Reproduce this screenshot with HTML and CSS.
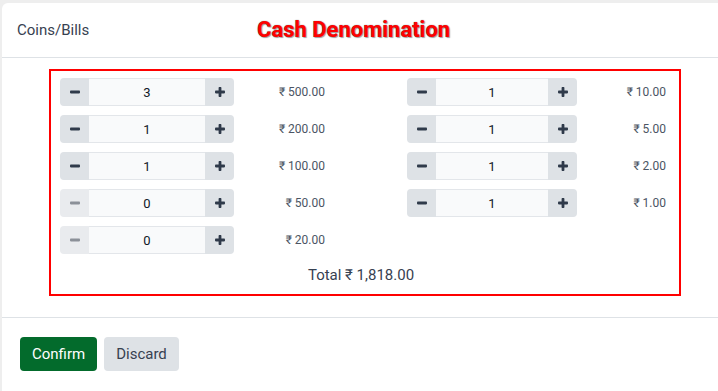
FILE: index.html
```html
<!DOCTYPE html>
<html>
<head>
<meta charset="utf-8">
<link rel="stylesheet" href="styles.css">
</head>
<body>
<div class="modal">
  <div class="header">
    <div class="header-label">Coins/Bills</div>
    <div class="header-title">Cash Denomination</div>
  </div>
  <div class="body">
    <div class="box">
      <div class="grid">
        <div class="item left">
          <div class="group">
            <button class="btn-step"><svg width="10" height="10" viewBox="0 0 10 10"><rect x="0" y="3.6" width="10" height="2.8" rx="0.8" fill="#2f3a4a"/></svg></button>
            <div class="qty">3</div>
            <button class="btn-step"><svg width="10" height="10" viewBox="0 0 10 10"><rect x="0" y="3.6" width="10" height="2.8" rx="0.8" fill="#2f3a4a"/><rect x="3.6" y="0" width="2.8" height="10" rx="0.8" fill="#2f3a4a"/></svg></button>
          </div>
          <div class="value">₹ 500.00</div>
        </div>
        <div class="item left">
          <div class="group">
            <button class="btn-step"><svg width="10" height="10" viewBox="0 0 10 10"><rect x="0" y="3.6" width="10" height="2.8" rx="0.8" fill="#2f3a4a"/></svg></button>
            <div class="qty">1</div>
            <button class="btn-step"><svg width="10" height="10" viewBox="0 0 10 10"><rect x="0" y="3.6" width="10" height="2.8" rx="0.8" fill="#2f3a4a"/><rect x="3.6" y="0" width="2.8" height="10" rx="0.8" fill="#2f3a4a"/></svg></button>
          </div>
          <div class="value">₹ 200.00</div>
        </div>
        <div class="item left">
          <div class="group">
            <button class="btn-step"><svg width="10" height="10" viewBox="0 0 10 10"><rect x="0" y="3.6" width="10" height="2.8" rx="0.8" fill="#2f3a4a"/></svg></button>
            <div class="qty">1</div>
            <button class="btn-step"><svg width="10" height="10" viewBox="0 0 10 10"><rect x="0" y="3.6" width="10" height="2.8" rx="0.8" fill="#2f3a4a"/><rect x="3.6" y="0" width="2.8" height="10" rx="0.8" fill="#2f3a4a"/></svg></button>
          </div>
          <div class="value">₹ 100.00</div>
        </div>
        <div class="item left">
          <div class="group">
            <button class="btn-step disabled"><svg width="10" height="10" viewBox="0 0 10 10"><rect x="0" y="3.6" width="10" height="2.8" rx="0.8" fill="#8b9098"/></svg></button>
            <div class="qty">0</div>
            <button class="btn-step"><svg width="10" height="10" viewBox="0 0 10 10"><rect x="0" y="3.6" width="10" height="2.8" rx="0.8" fill="#2f3a4a"/><rect x="3.6" y="0" width="2.8" height="10" rx="0.8" fill="#2f3a4a"/></svg></button>
          </div>
          <div class="value">₹ 50.00</div>
        </div>
        <div class="item left">
          <div class="group">
            <button class="btn-step disabled"><svg width="10" height="10" viewBox="0 0 10 10"><rect x="0" y="3.6" width="10" height="2.8" rx="0.8" fill="#8b9098"/></svg></button>
            <div class="qty">0</div>
            <button class="btn-step"><svg width="10" height="10" viewBox="0 0 10 10"><rect x="0" y="3.6" width="10" height="2.8" rx="0.8" fill="#2f3a4a"/><rect x="3.6" y="0" width="2.8" height="10" rx="0.8" fill="#2f3a4a"/></svg></button>
          </div>
          <div class="value">₹ 20.00</div>
        </div>
        <div class="item right">
          <div class="group">
            <button class="btn-step"><svg width="10" height="10" viewBox="0 0 10 10"><rect x="0" y="3.6" width="10" height="2.8" rx="0.8" fill="#2f3a4a"/></svg></button>
            <div class="qty">1</div>
            <button class="btn-step"><svg width="10" height="10" viewBox="0 0 10 10"><rect x="0" y="3.6" width="10" height="2.8" rx="0.8" fill="#2f3a4a"/><rect x="3.6" y="0" width="2.8" height="10" rx="0.8" fill="#2f3a4a"/></svg></button>
          </div>
          <div class="value">₹ 10.00</div>
        </div>
        <div class="item right">
          <div class="group">
            <button class="btn-step"><svg width="10" height="10" viewBox="0 0 10 10"><rect x="0" y="3.6" width="10" height="2.8" rx="0.8" fill="#2f3a4a"/></svg></button>
            <div class="qty">1</div>
            <button class="btn-step"><svg width="10" height="10" viewBox="0 0 10 10"><rect x="0" y="3.6" width="10" height="2.8" rx="0.8" fill="#2f3a4a"/><rect x="3.6" y="0" width="2.8" height="10" rx="0.8" fill="#2f3a4a"/></svg></button>
          </div>
          <div class="value">₹ 5.00</div>
        </div>
        <div class="item right">
          <div class="group">
            <button class="btn-step"><svg width="10" height="10" viewBox="0 0 10 10"><rect x="0" y="3.6" width="10" height="2.8" rx="0.8" fill="#2f3a4a"/></svg></button>
            <div class="qty">1</div>
            <button class="btn-step"><svg width="10" height="10" viewBox="0 0 10 10"><rect x="0" y="3.6" width="10" height="2.8" rx="0.8" fill="#2f3a4a"/><rect x="3.6" y="0" width="2.8" height="10" rx="0.8" fill="#2f3a4a"/></svg></button>
          </div>
          <div class="value">₹ 2.00</div>
        </div>
        <div class="item right">
          <div class="group">
            <button class="btn-step"><svg width="10" height="10" viewBox="0 0 10 10"><rect x="0" y="3.6" width="10" height="2.8" rx="0.8" fill="#2f3a4a"/></svg></button>
            <div class="qty">1</div>
            <button class="btn-step"><svg width="10" height="10" viewBox="0 0 10 10"><rect x="0" y="3.6" width="10" height="2.8" rx="0.8" fill="#2f3a4a"/><rect x="3.6" y="0" width="2.8" height="10" rx="0.8" fill="#2f3a4a"/></svg></button>
          </div>
          <div class="value">₹ 1.00</div>
        </div>
      </div>
      <div class="total">Total ₹ 1,818.00</div>
    </div>
  </div>
  <div class="footer">
    <button class="btn btn-confirm">Confirm</button>
    <button class="btn btn-discard">Discard</button>
  </div>
</div>
</body>
</html>
```

FILE: styles.css
```css
html, body {
  margin: 0;
  padding: 0;
  height: 100%;
  overflow: hidden;
}
body {
  background: #eeeeee;
  font-family: Roboto, "Liberation Sans", sans-serif;
  color: #374151;
  padding-top: 3px;
  padding-left: 2px;
  box-sizing: border-box;
}
.modal {
  background: #ffffff;
  border-top-left-radius: 6px;
  height: 100%;
}
.header {
  height: 54px;
  border-bottom: 1px solid #dee2e6;
  display: flex;
  align-items: center;
  padding-left: 15px;
}
.header-label {
  width: 240px;
  font-size: 15px;
  color: #374151;
}
.header-title {
  font-size: 22px;
  font-weight: 700;
  color: #ff0000;
  text-shadow: 0 0 1px #555, 1px 1px 1px rgba(0,0,0,0.35);
  margin-top: -2px;
}
.body {
  padding: 11px 0 21px 47px;
}
.box {
  border: 2px solid #ff0000;
  padding: 7px 0 9px 9px;
  box-sizing: content-box;
  width: 619px;
}
.grid {
  display: grid;
  grid-template-columns: 265px 259px;
  grid-template-rows: repeat(5, 28px);
  grid-auto-flow: column;
  column-gap: 82px;
  row-gap: 9px;
}
.item {
  display: flex;
  align-items: center;
}
.group {
  display: flex;
  height: 28px;
  border-radius: 4px;
  overflow: hidden;
}
.left .group { width: 174px; }
.right .group { width: 170px; }
.btn-step {
  width: 29px;
  border: none;
  background: #dee2e6;
  padding: 0;
  display: flex;
  align-items: center;
  justify-content: center;
}
.btn-step.disabled {
  background: #e9ebee;
}
.qty {
  flex: 1;
  background: #f9fafb;
  border-top: 1px solid #e3e6ea;
  border-bottom: 1px solid #e3e6ea;
  display: flex;
  align-items: center;
  justify-content: center;
  font-size: 13px;
  color: #111827;
}
.value {
  flex: 1;
  text-align: right;
  font-size: 12px;
  color: #4b5563;
}
.total {
  margin-top: 11px;
  line-height: 20px;
  font-size: 15px;
  text-align: center;
  padding-right: 17px;
  color: #374151;
}
.footer {
  border-top: 1px solid #dee2e6;
  padding: 19px 0 0 18px;
  display: flex;
  gap: 7px;
}
.btn {
  height: 34px;
  border: none;
  border-radius: 4px;
  font-family: Roboto, "Liberation Sans", sans-serif;
  font-size: 15px;
  padding: 0 12px;
}
.btn-confirm {
  background: #036b2c;
  color: #ffffff;
  width: 77px;
}
.btn-discard {
  background: #dee2e6;
  color: #374151;
  width: 75px;
}
```
